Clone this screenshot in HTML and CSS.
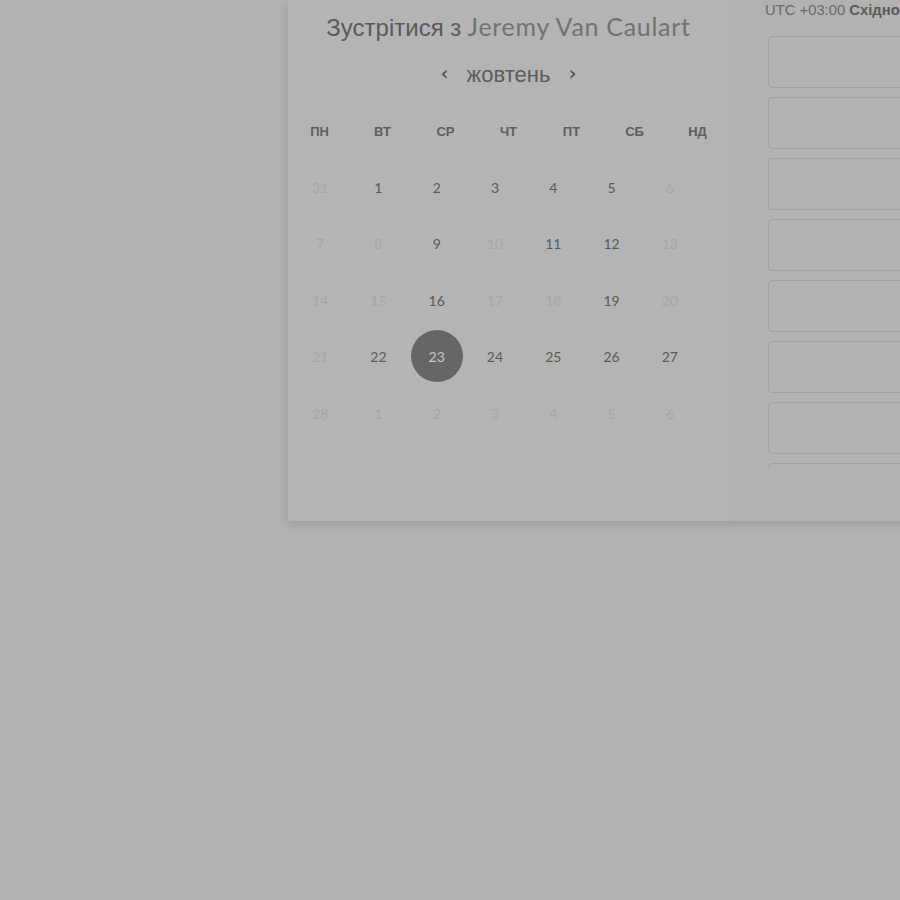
FILE: index.html
```html
<!DOCTYPE html>
<html lang="uk">
<head>
<meta charset="utf-8">
<title>Зустрітися з Jeremy Van Caulart</title>
<link rel="stylesheet" href="styles.css">
</head>
<body>
<div class="dialog">
  <section class="cal-panel">
    <h1 class="title"><span class="title-lead">Зустрітися з</span> <span class="title-name">Jeremy Van Caulart</span></h1>
    <div class="month-nav">
      <span class="chev">‹</span>
      <span class="month">жовтень</span>
      <span class="chev">›</span>
    </div>
    <div class="weekdays">
      <span>ПН</span><span>ВТ</span><span>СР</span><span>ЧТ</span><span>ПТ</span><span>СБ</span><span>НД</span>
    </div>
    <div class="days">
      <span class="d off">31</span><span class="d">1</span><span class="d">2</span><span class="d">3</span><span class="d">4</span><span class="d">5</span><span class="d off">6</span>
      <span class="d off">7</span><span class="d off">8</span><span class="d">9</span><span class="d off">10</span><span class="d">11</span><span class="d">12</span><span class="d off">13</span>
      <span class="d off">14</span><span class="d off">15</span><span class="d">16</span><span class="d off">17</span><span class="d off">18</span><span class="d">19</span><span class="d off">20</span>
      <span class="d off">21</span><span class="d">22</span><span class="d sel"><span class="dot">23</span></span><span class="d">24</span><span class="d">25</span><span class="d">26</span><span class="d">27</span>
      <span class="d off">28</span><span class="d off">1</span><span class="d off">2</span><span class="d off">3</span><span class="d off">4</span><span class="d off">5</span><span class="d off">6</span>
    </div>
  </section>
  <section class="tz-panel">
    <div class="tz">UTC +03:00 <b>Східно</b></div>
    <div class="slots">
      <div class="slot"></div>
      <div class="slot"></div>
      <div class="slot"></div>
      <div class="slot"></div>
      <div class="slot"></div>
      <div class="slot"></div>
      <div class="slot"></div>
      <div class="slot"></div>
      <div class="slot"></div>
    </div>
  </section>
</div>
</body>
</html>
```
FILE: styles.css
```css
html, body {
  margin: 0;
  padding: 0;
  background: #b2b2b2;
  overflow: hidden;
  height: 900px;
}
.dialog {
  margin-left: 288px;
  width: 760px;
  height: 521px;
  display: flex;
  background: #b4b4b4;
  box-shadow: -1px 3px 10px rgba(0, 0, 0, 0.12);
}
.cal-panel {
  width: 441px;
  flex: none;
  display: flex;
  flex-direction: column;
  align-items: center;
}
.title {
  margin: 9px 0 0;
  height: 34px;
  line-height: 34px;
  font-size: 25px;
  font-weight: 400;
  white-space: nowrap;
}
.title-lead {
  font-family: "Liberation Sans", Arial, sans-serif;
  color: #5a5a5a;
  font-size: 24px;
}
.title-name {
  font-family: Lato, "Noto Sans", sans-serif;
  color: #727272;
  letter-spacing: 0.7px;
}
.month-nav {
  margin-top: 18px;
  height: 28px;
  display: flex;
  align-items: center;
  gap: 15px;
  color: #5c5c5c;
}
.month {
  font-family: "Liberation Sans", Arial, sans-serif;
  font-size: 22px;
}
.chev {
  font-family: "DejaVu Sans", sans-serif;
  font-size: 20px;
  color: #4e4e4e;
  width: 14px;
  text-align: center;
  line-height: 20px;
  margin-top: -4px;
}
.weekdays {
  margin-top: 33px;
  width: 441px;
  display: grid;
  grid-template-columns: repeat(7, 1fr);
  height: 20px;
  line-height: 20px;
  font-family: "Liberation Sans", Arial, sans-serif;
  font-weight: 700;
  font-size: 13px;
  color: #5e5e5e;
  text-align: center;
}
.days {
  margin-top: 17px;
  align-self: flex-start;
  margin-left: 3px;
  width: 408px;
  display: grid;
  grid-template-columns: repeat(7, 1fr);
  grid-auto-rows: 56.5px;
  font-family: Lato, "Noto Sans", sans-serif;
  font-size: 14px;
  color: #5a5a5a;
}
.d {
  display: flex;
  align-items: center;
  justify-content: center;
}
.d.off {
  color: #a6a6a6;
}
.dot {
  width: 52px;
  height: 52px;
  border-radius: 50%;
  background: #666;
  color: #c6c6c6;
  display: flex;
  align-items: center;
  justify-content: center;
  margin-top: -1px;
}
.tz-panel {
  flex: 1;
  background: #b2b2b2;
  border-left: 1px solid #acacac;
  padding-left: 35px;
  overflow: hidden;
}
.tz {
  margin-top: 1px;
  height: 18px;
  line-height: 18px;
  font-family: "Liberation Sans", Arial, sans-serif;
  font-size: 14.8px;
  color: #6a6a6a;
  white-space: nowrap;
}
.tz b {
  color: #5a5a5a;
}
.slots {
  margin-top: 17px;
  margin-left: 3px;
  height: 433px;
  overflow: hidden;
  display: flex;
  flex-direction: column;
  gap: 9px;
}
.slot {
  flex: none;
  height: 50px;
  width: 300px;
  border: 1px solid #a1a1a1;
  border-radius: 4px;
}
```
